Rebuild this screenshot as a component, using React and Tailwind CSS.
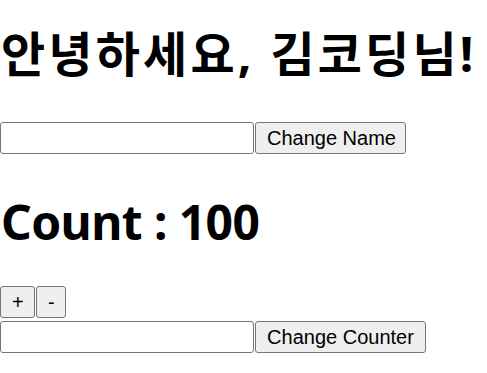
import { useState } from 'react';

const headFont = "font-['Noto_Sans','Noto_Sans_CJK_KR',sans-serif]";
const ctrlFont = "font-['Liberation_Sans',Arial,sans-serif]";

function TextBox() {
  return (
    <input
      type="text"
      className={`${ctrlFont} h-[32px] w-[254px] rounded-[3px] border border-[#767676] bg-white px-[3px] text-[20px] outline-none`}
    />
  );
}

function Btn({ children, className = '' }) {
  return (
    <button
      className={`${ctrlFont} h-[32px] whitespace-nowrap rounded-[3px] border border-[#767676] bg-[#efefef] px-[11px] text-[20px] leading-none text-black ${className}`}
    >
      {children}
    </button>
  );
}

export default function App() {
  const [name] = useState('김코딩');
  const [count] = useState(100);

  return (
    <div className="min-h-screen bg-white text-black">
      <h1 className={`${headFont} pt-[20px] pb-[34px] pl-[1px] text-[48px] font-bold leading-[68px] tracking-[3.2px]`}>
        안녕하세요, {name}님!
      </h1>
      <div className="flex h-[32px] items-start">
        <TextBox />
        <Btn className="ml-[1px] w-[151px] px-0">Change Name</Btn>
      </div>
      <h1 className={`${headFont} pt-[36px] pb-[32px] pl-[1px] text-[48px] font-bold leading-[64px] tracking-[-0.6px]`}>
        Count : {count}
      </h1>
      <div className="flex h-[31px] items-start gap-[1px]">
        <Btn className="h-[31px] w-[35px] px-0">+</Btn>
        <Btn className="h-[31px] w-[30px] px-0">-</Btn>
      </div>
      <div className="mt-[4px] flex h-[32px] items-start">
        <TextBox />
        <Btn className="ml-[1px] w-[171px] px-0">Change Counter</Btn>
      </div>
    </div>
  );
}
